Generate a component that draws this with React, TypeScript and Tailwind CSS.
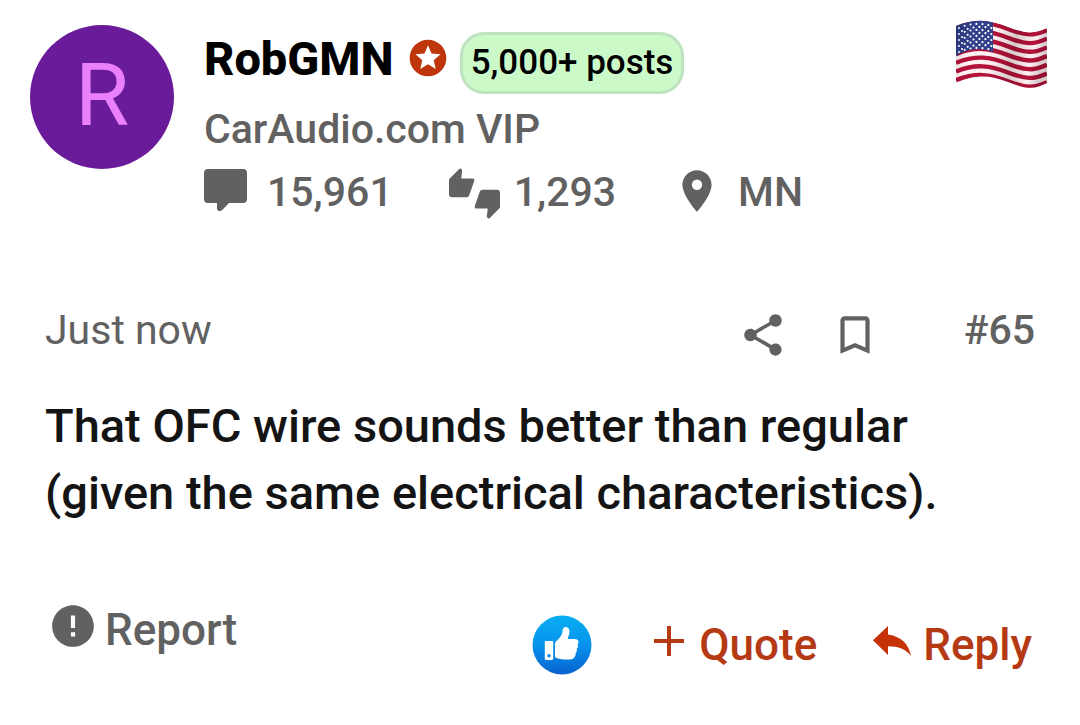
import { useState } from "react";
import { MdBookmarkBorder, MdError, MdPlace, MdShare, MdStars } from "react-icons/md";

interface Post {
  author: string;
  title: string;
  badge: string;
  messages: string;
  reactions: string;
  location: string;
  date: string;
  number: string;
  body: string;
}

const post: Post = {
  author: "RobGMN",
  title: "CarAudio.com VIP",
  badge: "5,000+ posts",
  messages: "15,961",
  reactions: "1,293",
  location: "MN",
  date: "Just now",
  number: "#65",
  body: "That OFC wire sounds better than regular (given the same electrical characteristics).",
};

const RED_STRIPES = [0, 2, 4, 6, 8, 10, 12];
const STAR_ROWS = [0, 1, 2, 3, 4, 5, 6, 7, 8];

function UsFlag() {
  return (
    <svg viewBox="0 0 92 70" className="w-[92px] h-[70px] shrink-0" role="img" aria-label="United States">
      <defs>
        <clipPath id="flag-shape">
          <path d="M0 6C20-2 34 0 52 7S78 14 91 8V63C78 70 70 69 52 62S20 54 0 63Z" />
        </clipPath>
        <linearGradient id="flag-shade" x1="0" y1="0" x2="1" y2="0.15">
          <stop offset="0" stopColor="#000" stopOpacity="0.14" />
          <stop offset="0.2" stopColor="#000" stopOpacity="0" />
          <stop offset="0.45" stopColor="#000" stopOpacity="0" />
          <stop offset="0.68" stopColor="#000" stopOpacity="0.16" />
          <stop offset="0.88" stopColor="#000" stopOpacity="0" />
          <stop offset="1" stopColor="#000" stopOpacity="0.16" />
        </linearGradient>
      </defs>
      <g clipPath="url(#flag-shape)">
        <rect width="92" height="70" fill="#fff0f2" />
        {RED_STRIPES.map((i) => (
          <path
            key={i}
            d="M0 8C20 0 34 2 52 9S78 16 91 10"
            transform={`translate(0 ${i * 4.35})`}
            fill="none"
            stroke="#b3123a"
            strokeWidth="4.4"
          />
        ))}
        <path d="M0 5C14-2 25-1 37 2V32C25 28 14 28 0 36Z" fill="#2f3f8c" />
        {STAR_ROWS.map((row) => (
          <path
            key={row}
            d="M3 8C14 3 25 3 36 6"
            transform={`translate(${row % 2 ? 3 : 0} ${row * 3})`}
            fill="none"
            stroke="#fff"
            strokeWidth="2.2"
            strokeLinecap="round"
            strokeDasharray="0 6"
          />
        ))}
        <rect width="92" height="70" fill="url(#flag-shade)" />
      </g>
    </svg>
  );
}

function ThumbsIcon() {
  return (
    <svg viewBox="0 0 51 51" className="ml-14 mr-[14px] mt-px size-[51px]" fill="currentColor" aria-label="Reactions">
      <path
        id="thumb"
        d="M0 12.500c0-1 .3-1.600 1-2.300L10.200 1c.7-.7 1.400-.7 2-.1l.5.600c.4.500.5.900.4 1.600L12.300 10.500H23.500c1.400 0 2.200 1.100 1.700 2.600L20.300 27c-.6 1.600-1.500 2.300-3 2.300H3C1.200 29.300 0 28.100 0 26.300z"
      />
      <use href="#thumb" transform="rotate(180 25.500 25.500)" />
    </svg>
  );
}

function LikeIcon() {
  return (
    <svg viewBox="0 0 60 60" className="size-[60px]" aria-hidden="true">
      <defs>
        <linearGradient id="like-fill" x1="0" y1="0" x2="0" y2="1">
          <stop offset="0" stopColor="#08aef3" />
          <stop offset="0.5" stopColor="#0693ec" />
          <stop offset="1" stopColor="#0862cf" />
        </linearGradient>
      </defs>
      <circle cx="30" cy="30" r="29.5" fill="url(#like-fill)" />
      <path
        fill="#fff"
        fillRule="evenodd"
        d="M14 26h6c.7 0 1.200.5 1.200 1.200v16.600c0 .7-.5 1.200-1.200 1.200h-6c-.7 0-1.200-.5-1.200-1.200V27.200c0-.7.5-1.200 1.200-1.200zM17 39a1.700 1.700 0 1 0 0 3.400 1.700 1.700 0 0 0 0-3.400z"
      />
      <path
        fill="#fff"
        d="M23 28.500c0-1.500 1.700-2.500 3.200-4.200 1.800-2.100 3.500-3.900 4.100-6.500.5-2.300.4-5.300 2.700-5.800 2.900-.6 4.500 1.800 4.500 4.600 0 3-1.500 5-1.700 7.500h7.200c2.300 0 3.700 1.500 3.500 3.300-.1 1-.6 1.700-1 2.200.5.8.7 1.700.4 2.600-.2.8-.7 1.500-1.300 1.900.3.8.4 1.600.1 2.500-.2.7-.7 1.300-1.200 1.700.3 1 .2 1.900-.2 2.700-.9 1.900-2.500 3.300-5.600 3.500-4.700.3-9.600-.3-12.600-1.300-1.300-.5-2.100-1-2.100-2z"
      />
    </svg>
  );
}

export default function App() {
  const [liked, setLiked] = useState(false);
  const [bookmarked, setBookmarked] = useState(false);

  return (
    <article className="bg-white font-['Roboto',sans-serif] font-medium text-[#616161]">
      <header className="flex items-start pt-5 pr-8 pl-[30px]">
        <a
          href="#profile"
          aria-label={post.author}
          className="mt-[5px] flex size-36 shrink-0 items-center justify-center rounded-full bg-[#6a1b9a] pb-1 text-[88px] leading-none font-normal text-[#ea80fc]"
        >
          R
        </a>
        <div className="ml-[30px] min-w-0 flex-1 pt-3 text-[41px]">
          <div className="flex items-start">
            <a href="#profile" className="text-[47px] leading-[54px] font-extrabold text-black">
              {post.author}
            </a>
            <MdStars className="ml-3 mt-1 size-11 text-[#bf360c]" />
            <span className="ml-[10px] rounded-[24px] border-[3px] border-[#bfe3bf] bg-[#ccf9c8] px-2 text-[35px] leading-[56px] text-black">
              {post.badge}
            </span>
          </div>
          <div className="mt-1 leading-[63px]">{post.title}</div>
          <div className="flex items-center leading-[63px]">
            <svg viewBox="0 0 43 43" className="mr-5 mb-1 size-[43px]" fill="currentColor" aria-label="Messages">
              <path d="M4 0h35a4 4 0 0 1 4 4v26a4 4 0 0 1-4 4H25l-7 7.300C16.500 42.800 13 42 13 40v-6H4a4 4 0 0 1-4-4V4a4 4 0 0 1 4-4z" />
            </svg>
            <span>{post.messages}</span>
            <ThumbsIcon />
            <span>{post.reactions}</span>
            <MdPlace className="mb-1 ml-14 mr-4 size-[50px]" />
            <span>{post.location}</span>
          </div>
        </div>
        <UsFlag />
      </header>

      <div className="mt-[75px] flex items-center pl-[45px] pr-[45px] text-[41px] leading-[63px]">
        <time className="font-normal">{post.date}</time>
        <button type="button" aria-label="Share" className="ml-auto mt-2">
          <MdShare className="size-[50px]" />
        </button>
        <button
          type="button"
          aria-label="Bookmark"
          aria-pressed={bookmarked}
          onClick={() => setBookmarked(!bookmarked)}
          className="ml-[42px] mt-2"
        >
          <MdBookmarkBorder className="size-[50px]" />
        </button>
        <a href="#post-65" className="ml-[84px]">
          {post.number}
        </a>
      </div>

      <p className="mt-[30px] px-[45px] text-[47px] leading-[67px] text-[#141414]">{post.body}</p>

      <footer className="flex items-start justify-between pl-12 pr-12 pt-[74px] text-[44px] leading-[60px]">
        <a href="#report" className="flex items-center">
          <MdError className="mb-2 mr-[7px] size-[50px]" />
          Report
        </a>
        <div className="mt-[15px] flex items-center text-[#b53a14]">
          <button type="button" aria-label="Like" aria-pressed={liked} onClick={() => setLiked(!liked)}>
            <LikeIcon />
          </button>
          <a href="#quote" className="ml-[61px] flex items-center">
            <svg viewBox="0 0 32 32" className="mb-2 mr-[14px] size-8" fill="none" stroke="currentColor" strokeWidth="4" aria-hidden="true">
              <path d="M1 16h30M16 1v30" />
            </svg>
            Quote
          </a>
          <a href="#reply" className="ml-14 flex items-center">
            <svg viewBox="0 0 38 30" className="mb-2 mr-3 h-[30px] w-[38px]" fill="#c43205" aria-hidden="true">
              <path d="M15 8.500V0L0 14.300 15 29v-8.700c10.300 0 17.600 2.700 23 9.700C35.800 18.800 29.200 10.500 15 8.500z" />
            </svg>
            Reply
          </a>
        </div>
      </footer>
    </article>
  );
}
